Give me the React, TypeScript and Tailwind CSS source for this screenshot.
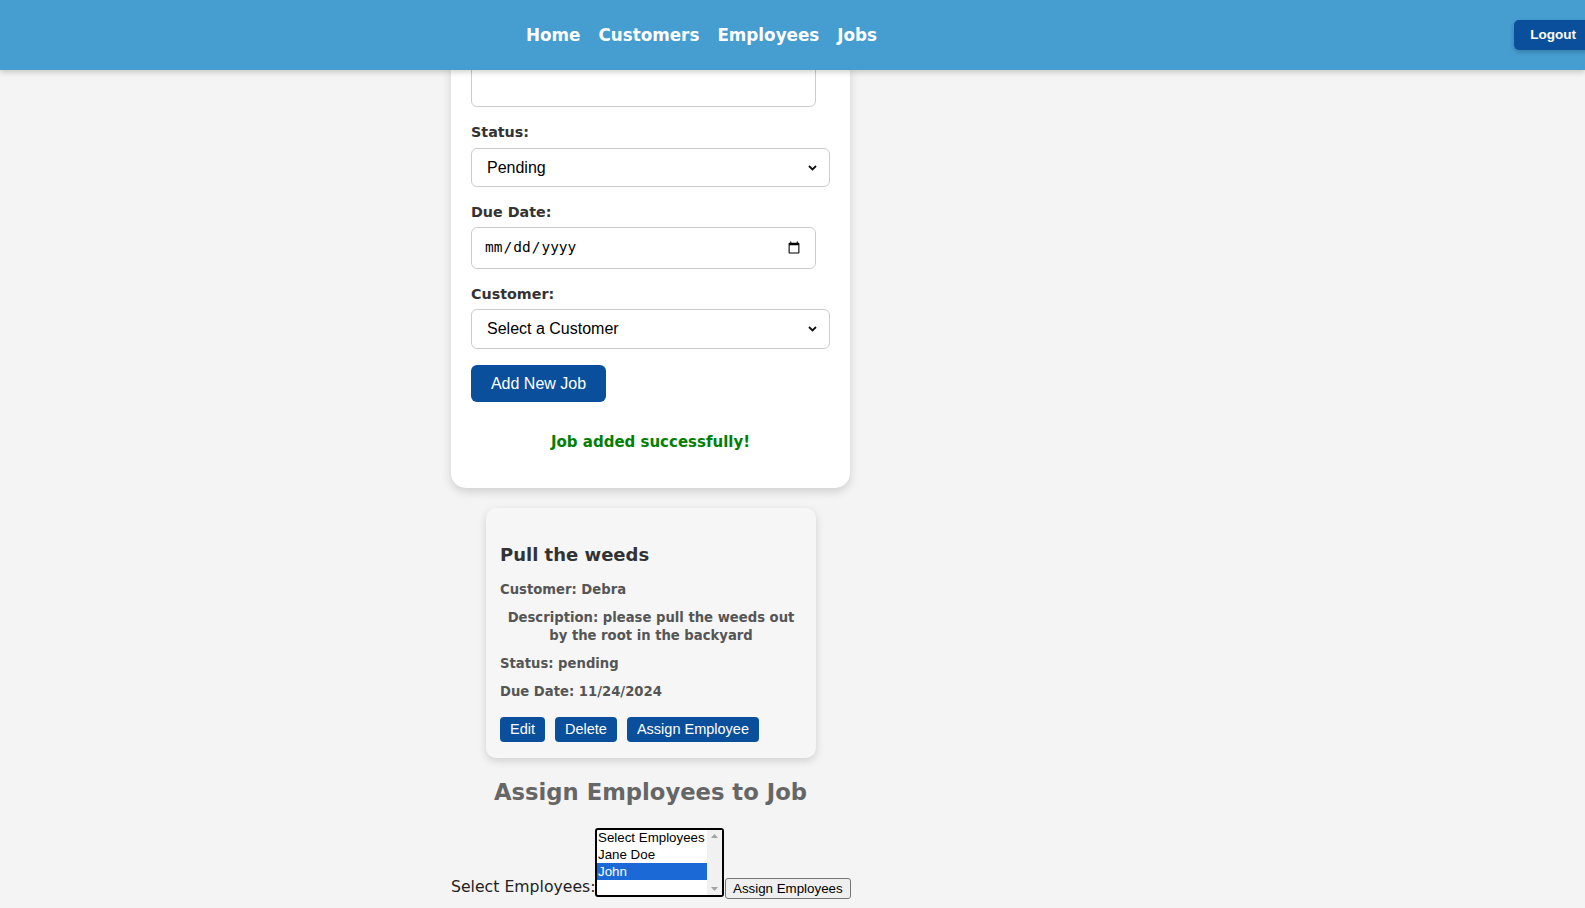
import React from 'react';

const mont = { fontFamily: '"DejaVu Sans", "Open Sans", sans-serif' };

function Chevron() {
  return (
    <svg className="absolute right-[12px] top-1/2 -translate-y-1/2" width="9" height="6" viewBox="0 0 9 6" fill="none">
      <path d="M1 1l3.5 3.5L8 1" stroke="#111" strokeWidth="1.8" />
    </svg>
  );
}

function FakeSelect({ value, h }: { value: string; h: string }) {
  return (
    <div className={`relative w-[359px] ${h} rounded-[6px] border border-[#ccc] bg-white flex items-center pl-[15px] font-['Liberation_Sans',Arial,sans-serif] text-[16px] text-black`}>
      {value}
      <Chevron />
    </div>
  );
}

function Label({ text, mb }: { text: string; mb: string }) {
  return (
    <div className={`mt-[15px] ${mb} h-[20px] leading-[20px] text-[14.3px] font-bold text-[#333]`} style={mont}>
      {text}
    </div>
  );
}

export default function App() {
  return (
    <div className="h-[908px] overflow-hidden bg-[#f4f4f4] flex flex-col">
      <header className="relative z-10 h-[70px] shrink-0 bg-[#459dd0] shadow-[0_2px_6px_rgba(0,0,0,0.2)] flex items-center overflow-hidden">
        <nav className="pl-[526px] pt-[2px] flex gap-[18px] text-white font-bold text-[16.8px]" style={mont}>
          <span>Home</span>
          <span>Customers</span>
          <span>Employees</span>
          <span>Jobs</span>
        </nav>
        <button className="ml-auto mr-[-7px] h-[30px] px-[16px] rounded-[5px] bg-[#0a4f9c] text-white font-bold text-[13.5px] font-['Liberation_Sans',Arial,sans-serif] shadow-[0_2px_4px_rgba(0,0,0,0.2)]">
          Logout
        </button>
      </header>

      <main className="pl-[451px] flex flex-col">
        <div className="w-[399px] -mt-[5px] bg-white rounded-b-[15px] shadow-[0_4px_10px_rgba(0,0,0,0.15)] px-[20px] pb-[36px]">
          <div className="w-[345px] h-[42px] rounded-[6px] border border-[#ccc] bg-white" />

          <Label text="Status:" mb="mb-[6px]" />
          <FakeSelect value="Pending" h="h-[39px]" />

          <Label text="Due Date:" mb="mb-[5px]" />
          <input
            type="date"
            className="w-[345px] h-[42px] rounded-[6px] border border-[#ccc] bg-white pl-[12px] pr-[12px] text-[14.5px] text-black font-['DejaVu_Sans_Mono',monospace]"
          />

          <Label text="Customer:" mb="mb-[5px]" />
          <FakeSelect value="Select a Customer" h="h-[40px]" />

          <button className="mt-[16px] h-[37px] w-[135px] rounded-[6px] bg-[#0a4f9c] text-white text-[16px] font-['Liberation_Sans',Arial,sans-serif]">
            Add New Job
          </button>

          <div className="mt-[30px] h-[20px] leading-[20px] text-center text-[15px] font-bold text-[#008000]" style={mont}>
            Job added successfully!
          </div>
        </div>

        <div className="mt-[20px] w-[330px] ml-[35px] bg-[#f6f6f6] rounded-[10px] shadow-[0_3px_8px_rgba(0,0,0,0.15)] px-[14px] pt-[36px] pb-[16px]" style={mont}>
          <h3 className="h-[22px] leading-[22px] text-[18px] font-bold text-[#333]">Pull the weeds</h3>
          <div className="text-[13.2px] font-bold text-[#555] leading-[18px]">
            <p className="mt-[15px]">Customer: Debra</p>
            <p className="mt-[10px] text-center">
              Description: please pull the weeds out
              <br />
              by the root in the backyard
            </p>
            <p className="mt-[10px]">Status: pending</p>
            <p className="mt-[10px]">Due Date: 11/24/2024</p>
          </div>
          <div className="mt-[16px] flex gap-[10px] font-['Liberation_Sans',Arial,sans-serif] text-[14.5px] text-white">
            <button className="h-[25px] px-[10px] rounded-[4px] bg-[#0a4f9c]">Edit</button>
            <button className="h-[25px] px-[10px] rounded-[4px] bg-[#0a4f9c]">Delete</button>
            <button className="h-[25px] px-[10px] rounded-[4px] bg-[#0a4f9c]">Assign Employee</button>
          </div>
        </div>

        <h2 className="mt-[19px] w-[399px] h-[30px] leading-[30px] text-center text-[22.7px] font-bold text-[#666]" style={mont}>
          Assign Employees to Job
        </h2>

        <div className="mt-[21px] flex items-end whitespace-nowrap">
          <span className="h-[20px] leading-[20px] w-[144px] shrink-0 text-[15.7px] text-[#222]" style={mont}>
            Select Employees:
          </span>
          <div className="w-[129px] h-[69px] shrink-0 border-2 border-black rounded-[3px] bg-white flex font-['Liberation_Sans',Arial,sans-serif] text-[13.33px] text-black">
            <div className="flex-1 -mt-[1px] leading-[17px]">
              <div className="pl-[1px]">Select Employees</div>
              <div className="pl-[1px]">Jane Doe</div>
              <div className="pl-[1px] bg-[#1a69d6] text-white">John</div>
            </div>
            <div className="w-[15px] bg-[#f1f1f1] flex flex-col justify-between items-center py-[4px]">
              <svg width="7" height="4" viewBox="0 0 7 4"><path d="M0 4L3.5 0L7 4z" fill="#a3a3a3" /></svg>
              <svg width="7" height="4" viewBox="0 0 7 4"><path d="M0 0L3.5 4L7 0z" fill="#a3a3a3" /></svg>
            </div>
          </div>
          <button className="-mb-[2px] ml-[1px] shrink-0 h-[21px] px-[7px] rounded-[3px] border border-[#767676] bg-[#efefef] text-black text-[13.33px] font-['Liberation_Sans',Arial,sans-serif]">
            Assign Employees
          </button>
        </div>
      </main>
    </div>
  );
}
